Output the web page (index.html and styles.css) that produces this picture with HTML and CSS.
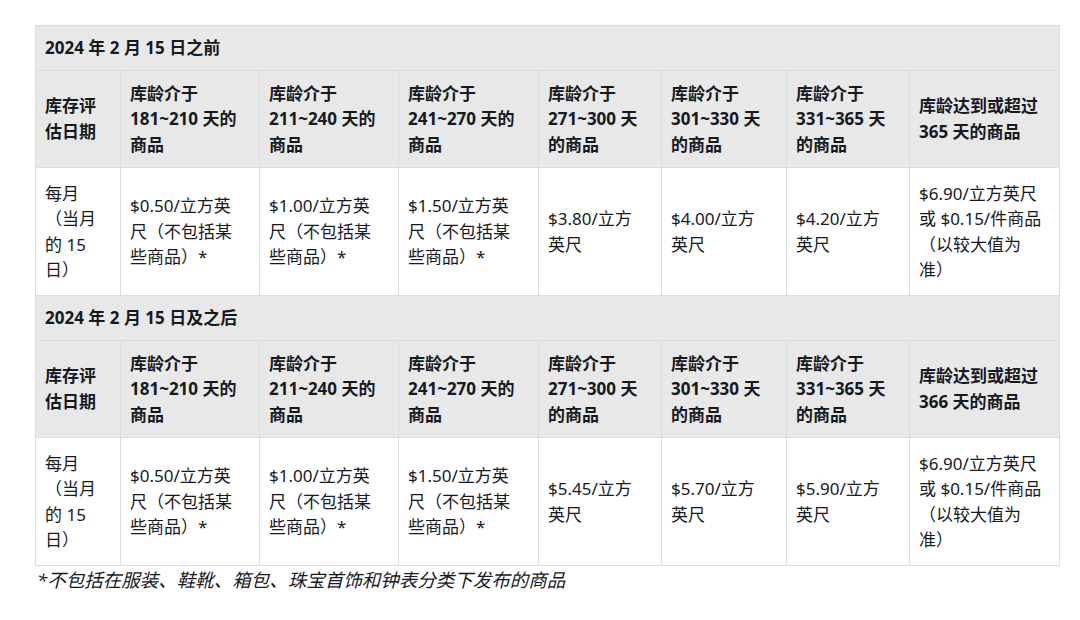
FILE: index.html
```html
<!DOCTYPE html>
<html lang="zh-CN">
<head>
<meta charset="utf-8">
<link rel="stylesheet" href="styles.css">
</head>
<body>
<div class="page">
<table class="fees">
<colgroup>
<col class="c1"><col class="c2"><col class="c3"><col class="c4"><col class="c5"><col class="c6"><col class="c7"><col class="c8">
</colgroup>
<tbody>
<tr class="title"><th colspan="8">2024 年 2 月 15 日之前</th></tr>
<tr class="head">
<th>库存评<br>估日期</th>
<th>库龄介于<br>181~210 天的<br>商品</th>
<th>库龄介于<br>211~240 天的<br>商品</th>
<th>库龄介于<br>241~270 天的<br>商品</th>
<th>库龄介于<br>271~300 天<br>的商品</th>
<th>库龄介于<br>301~330 天<br>的商品</th>
<th>库龄介于<br>331~365 天<br>的商品</th>
<th>库龄达到或超过<br>365 天的商品</th>
</tr>
<tr class="data">
<td>每月<br>（当月<br>的 15<br>日）</td>
<td>$0.50/立方英<br>尺（不包括某<br>些商品）*</td>
<td>$1.00/立方英<br>尺（不包括某<br>些商品）*</td>
<td>$1.50/立方英<br>尺（不包括某<br>些商品）*</td>
<td>$3.80/立方<br>英尺</td>
<td>$4.00/立方<br>英尺</td>
<td>$4.20/立方<br>英尺</td>
<td>$6.90/立方英尺<br>或 $0.15/件商品<br>（以较大值为<br>准）</td>
</tr>
<tr class="title"><th colspan="8">2024 年 2 月 15 日及之后</th></tr>
<tr class="head">
<th>库存评<br>估日期</th>
<th>库龄介于<br>181~210 天的<br>商品</th>
<th>库龄介于<br>211~240 天的<br>商品</th>
<th>库龄介于<br>241~270 天的<br>商品</th>
<th>库龄介于<br>271~300 天<br>的商品</th>
<th>库龄介于<br>301~330 天<br>的商品</th>
<th>库龄介于<br>331~365 天<br>的商品</th>
<th>库龄达到或超过<br>366 天的商品</th>
</tr>
<tr class="data">
<td>每月<br>（当月<br>的 15<br>日）</td>
<td>$0.50/立方英<br>尺（不包括某<br>些商品）*</td>
<td>$1.00/立方英<br>尺（不包括某<br>些商品）*</td>
<td>$1.50/立方英<br>尺（不包括某<br>些商品）*</td>
<td>$5.45/立方<br>英尺</td>
<td>$5.70/立方<br>英尺</td>
<td>$5.90/立方<br>英尺</td>
<td>$6.90/立方英尺<br>或 $0.15/件商品<br>（以较大值为<br>准）</td>
</tr>
</tbody>
</table>
<p class="note">*不包括在服装、鞋靴、箱包、珠宝首饰和钟表分类下发布的商品</p>
</div>
</body>
</html>
```
FILE: styles.css
```css
html, body {
  margin: 0;
  padding: 0;
  background: #ffffff;
}
body {
  font-family: "Noto Sans", "Noto Sans CJK SC", sans-serif;
  color: #16191f;
  font-size: 17px;
  line-height: 25.5px;
}
.page {
  padding: 25px 21px 0 35px;
}
.fees {
  width: 1024px;
  table-layout: fixed;
  border-collapse: collapse;
}
.c1 { width: 85px; }
.c2 { width: 139px; }
.c3 { width: 139px; }
.c4 { width: 140px; }
.c5 { width: 123px; }
.c6 { width: 125px; }
.c7 { width: 123px; }
.c8 { width: 150px; }
.fees th, .fees td {
  border: 1px solid #dcdcdc;
  text-align: left;
  vertical-align: middle;
  padding: 10px 9px;
  white-space: nowrap;
}
.fees th {
  font-weight: 700;
  background: #e8e8e8;
}
.title th {
  padding: 9px 9px;
}
.head th {
  padding: 10px 9px;
}
.data td {
  padding: 12.5px 9px;
  background: #ffffff;
}
.note {
  margin: 1px 0 0 2px;
  font-style: italic;
  font-size: 18.5px;
}
```
